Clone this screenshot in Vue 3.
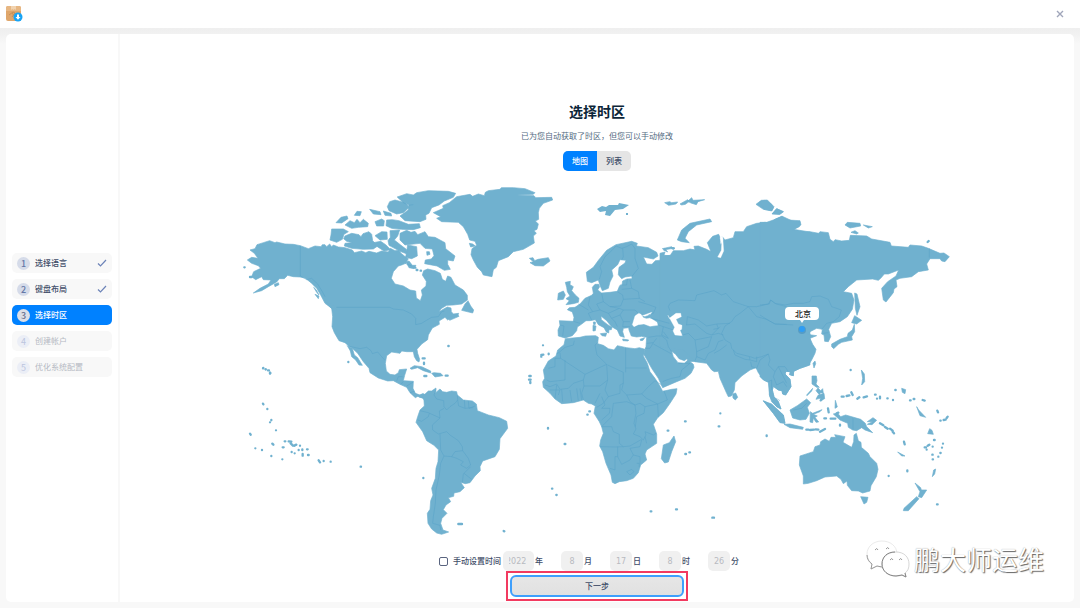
<script setup>
import { ref } from 'vue'

const steps = [
  { n: 1, label: '选择语言', state: 'done' },
  { n: 2, label: '键盘布局', state: 'done' },
  { n: 3, label: '选择时区', state: 'current' },
  { n: 4, label: '创建帐户', state: 'todo' },
  { n: 5, label: '优化系统配置', state: 'todo' }
]
const view = ref('map')
const manual = ref(false)
const fields = ref([
  { unit: '年', value: '2022', wide: true },
  { unit: '月', value: '8' },
  { unit: '日', value: '17' },
  { unit: '时', value: '8' },
  { unit: '分', value: '26' }
])
</script>

<template>
  <div class="window">
    <header class="titlebar">
      <svg class="app-icon" viewBox="0 0 18 18" aria-hidden="true">
        <rect x="1" y="1" width="15" height="15" rx="2" fill="#dfa66b" />
        <path d="M1 3q0-2 2-2h11q2 0 2 2v3H1z" fill="#e7b783" />
        <path d="M6 1h5v4L9.500 4 8.500 5 7.500 4 6 5z" fill="#f1d3b0" />
        <path d="M4 10l4-3 2 1-3 4M7 8l3 4" fill="none" stroke="#c58f58" stroke-width="1" />
        <circle cx="13" cy="12" r="4.500" fill="#18a4f5" />
        <path d="M12 9.500h2v2.500h1.500L13 14.800 10.500 12H12z" fill="#fff" />
      </svg>
      <button class="close" aria-label="关闭">
        <svg viewBox="0 0 8 8"><path d="M1 1l6 6M7 1l-6 6" fill="none" stroke="#a0a6ba" stroke-width="1.400" /></svg>
      </button>
    </header>

    <div class="panel">
      <nav class="sidebar">
        <button v-for="s in steps" :key="s.n" class="step" :class="s.state">
          <span class="num">{{ s.n }}</span>
          <span>{{ s.label }}</span>
          <svg v-if="s.state === 'done'" class="check" viewBox="0 0 10 8" aria-hidden="true">
            <path d="M1 4.500l2.500 2.500L9 1" fill="none" stroke="#6c83b8" stroke-width="1.200" />
          </svg>
        </button>
      </nav>

      <main class="content">
        <h1>选择时区</h1>
        <p class="sub">已为您自动获取了时区，但您可以手动修改</p>
        <div class="tabs">
          <button :class="{ on: view === 'map' }" @click="view = 'map'">地图</button>
          <button :class="{ on: view === 'list' }" @click="view = 'list'">列表</button>
        </div>

        <div class="map">
          <svg viewBox="237 180 720 360" role="img" aria-label="世界地图">
            <!-- North America -->
            <g class="land" transform="translate(235 180) scale(.33333)">
              <path d="M45 210L60 206 66 194 85 188 104 182 120 188 125 186 150 192 175 193 196 197 220 206 240 198 258 200 262 194 270 194 275 200 284 192 290 200 295 195 310 201 330 203 352 210 358 218 380 213 392 218 402 214 425 219 440 213 460 216 466 205 480 212 492 211 497 219 508 228 520 236 512 250 500 255 490 258 475 275 469 295 480 312 505 318 525 330 542 333 544 354 556 362 562 345 559 330 573 318 574 304 562 285 566 272 578 267 600 272 616 280 622 298 632 304 638 288 648 292 660 315 685 330 697 346 697 360 680 372 655 375 635 376 618 386 612 395 637 381 648 384 649 395 655 402 671 400 668 408 650 412 638 420 630 412 612 423 613 433 592 444 580 465 578 479 560 492 546 508 548 520 554 538 552 546 545 542 538 530 535 515 515 515 500 513 495 520 470 516 455 527 451 550 454 573 465 583 480 585 490 578 493 569 515 567 509 586 505 602 535 604 534 625 541 640 555 645 566 641 575 648 566 656 550 648 541 653 525 638 515 622 495 613 475 602 458 603 430 594 405 578 402 565 385 545 368 520 352 505 340 497 330 488 312 482 298 458 291 440 293 410 290 385 270 370 257 345 245 325 228 308 210 294 195 291 175 290 158 286 148 296 133 296 125 306 100 320 80 332 55 339 75 325 100 312 108 300 85 299 80 290 62 299 50 290 56 275 77 265 70 257 50 250 37 240 50 232 69 235 58 220z" />
              <path d="M338 499L352 505 358 525 368 533 382 556 372 555 362 540 350 530 346 513zM290 147L325 147 340 155 327 163 322 178 305 187 285 180 288 165zM330 168L350 160 372 164 378 170 384 161 402 155 410 163 413 182 428 198 415 207 385 208 350 205 328 198 330 190 352 188 335 184 326 176zM303 128L318 112 336 108 339 116 320 129zM330 135L345 122 358 128 366 118 375 128 385 118 400 130 398 140 370 142 350 145zM358 106L366 94 379 95 375 107zM404 88L435 95 438 104 415 102zM445 93L468 100 470 108 450 106zM420 125L440 117 448 122 446 138 425 138zM455 120L472 119 492 122 520 133 553 131 556 143 535 149 500 148 470 145 453 137zM457 80L464 65 480 60 510 68 523 82 505 98 485 102 462 92zM487 51L515 41 535 45 545 38 580 32 640 34 662 40 655 52 628 63 612 75 590 83 582 100 572 105 573 118 555 125 510 122 495 108 520 90 522 75 505 67z" />
              <path d="M420 167L440 155 456 156 457 178 435 180zM415 188l22-4 15 10 15 15-20 4-20-13zM465 152L494 150 488 168 478 180 497 195 514 208 516 222 495 214 462 196 459 182 466 172zM495 160L515 151 528 157 540 154 548 164 570 155 580 170 600 172 630 188 632 206 660 228 655 243 638 240 638 253 646 268 628 271 606 258 569 251 571 240 589 237 597 227 592 207 570 205 555 190 510 195 495 180zM518 195L545 200 547 228 530 236 512 232zM513 246L522 243 532 256 543 256 537 266 522 263zM575 215l8 0 2 8-9 3zM699 362L707 378 716 390 713 399 680 391 690 372zM525 565L538 557 560 560 587 573 587 579 565 572 548 563 530 568zM590 580L597 578 617 580 624 587 600 591zM236 322L244 330 252 345 245 337zM240 343L252 348 250 356zM271 366L286 372 300 382 305 392 290 386zM118 313l12-5 2 6-12 6zM640 413l28-9 4 5-28 12z" />
              <path class="dots" d="M28 262h1M45 291h5M545 270h2M557 272h1M540 263h1M640 498h1M568 588h6M632 587h6M563 535h6M567 548v4M84 565h0M92 568h0M99 571h3M105 578v3M340 546h0M602 400h1" />
            </g>
            <!-- Greenland and Iceland -->
            <g class="land" transform="translate(400 180) scale(.33333)">
              <path d="M100 98L130 85 128 77 148 68 170 50 210 43 218 49 235 42 253 47 256 37 265 32 300 28 304 23 340 23 375 26 405 38 400 43 350 45 402 47 407 53 455 52 458 60 430 70 418 85 415 98 416 118 406 123 415 132 411 148 402 152 409 160 400 168 403 189 370 208 340 215 325 230 295 242 289 262 280 269 276 290 250 285 245 275 232 262 220 240 213 224 216 206 230 196 225 184 209 180 203 163 190 140 175 127 125 125 110 115 122 110zM388 235L399 233 404 242 414 238 445 233 450 243 430 258 405 257 390 248 400 245zM208 190l10 2 8 6-14 3z" />
            </g>
            <!-- South America -->
            <g class="land" transform="translate(240 350) scale(.33333)">
              <path d="M518 125L535 138 548 131 556 138 550 144 538 142zM548 139L565 123 575 123 588 114 587 128 600 117 608 125 620 127 635 123 650 125 652 135 670 150 697 153 709 162 712 182 745 195 778 203 800 214 803 235 780 266 778 298 765 320 728 333 720 350 721 362 705 378 690 398 676 401 662 397 673 413 660 425 642 429 641 439 625 443 632 455 618 465 610 479 621 490 606 505 602 520 609 540 626 546 605 553 590 549 575 537 564 520 562 490 570 478 572 452 579 435 575 415 586 385 588 355 594 335 596 300 582 286 560 272 548 245 528 217 533 200 540 180 553 168 552 152z" />
              <path class="dots" d="M655 522h11M791 543l2 1M362 350h1M550 384h0M70 54h0M77 58h0M90 69h1M69 161l1 2M82 177h0M94 210v1M90 217h0M108 241h0M30 251l2 3M97 281l3 3M46 295h0M66 300h0M94 318h0M127 328h0M128 292h3M134 274h2M146 274l8 1M152 280l7 7M163 287l6-3M155 306h0M164 310h0M176 300h0M187 298v2M188 312v5M201 298h2M204 315h2M236 331l4 6M251 333h0M272 335h0M180 287h0" />
            </g>
            <!-- Africa and Europe -->
            <g class="land" transform="translate(530 230) scale(.33333)">
              <path d="M106 326L150 322 166 318 197 317 205 322 203 341 220 346 235 356 252 360 262 347 290 353 315 356 328 353 345 358 340 378 352 400 360 425 375 445 388 465 398 484 425 478 441 476 438 492 420 520 400 548 383 563 370 583 380 612 380 640 350 660 345 672 350 690 332 705 325 728 310 745 290 752 268 755 255 761 247 757 243 735 228 700 218 665 209 648 212 630 220 610 215 590 208 575 192 550 196 528 185 522 175 520 160 510 130 518 95 521 75 507 60 490 40 472 38 455 44 445 40 420 55 393 78 378 83 360 102 344zM432 618L437 635 425 665 415 696 404 699 394 686 400 645 418 638z" />
              <path d="M88 272L130 274 132 262 127 246 112 239 118 233 135 232 150 222 165 205 185 196 190 190 187 172 195 163 206 163 209 170 203 180 215 189 240 187 262 184 269 167 276 165 278 153 291 147 306 146 306 138 285 141 275 146 265 134 267 112 285 99 288 91 270 89 263 104 245 120 249 138 240 156 235 175 217 182 210 166 205 150 185 158 172 154 169 127 190 112 206 90 230 61 258 44 282 39 305 34 322 40 319 48 355 53 380 67 384 78 370 87 340 81 350 102 366 103 376 92 400 90 402 78 420 76 430 80 440 70 480 60 520 60 560 70 560 420 545 405 530 394 505 395 475 394 471 386 463 392 447 386 437 373 425 364 430 380 444 398 463 400 474 390 490 403 492 412 483 430 465 445 440 455 398 473 385 445 365 415 350 388 341 372 348 350 350 322 335 319 320 321 304 318 297 300 296 293 280 295 278 305 283 322 270 318 262 300 245 290 230 272 213 258 214 269 233 284 246 292 244 299 237 299 236 309 229 306 222 293 205 284 196 269 180 272 168 272 154 283 142 291 140 302 127 317 105 324 85 318 84 300 90 286zM106 157L121 154 120 164 130 170 125 182 136 195 147 205 145 217 130 221 108 224 118 212 108 206 120 198 112 185 110 172zM85 190L100 183 106 195 100 208 83 210zM211 311L230 309 227 319 216 317zM189 286l9 2-2 14-7 1zM190 276l6 0v7l-5 1zM278 327l18 3-2 3-15-1zM330 328l14-5-5 8-7 1zM397 56L425 50 430 55 405 59z" />
              <path class="dots" d="M-2 438h4M-3 449h5M1 456v3M34 375l6-1M34 378v2M56 371v2M39 346h0M178 544h2M172 554h1M54 594v2M104 642h2M66 776h1M79 795h1M413 602h2M465 574h2M566 589h2M466 672h2M478 667h2M430 55h1M362 844h2M438 838h3M547 863h5" />
              <path class="sea" d="M307 284L315 258 326 250 333 253 340 263 350 266 361 264 381 277 383 286 360 289 342 282 325 284 312 290zM337 257L365 247 362 253 345 259zM418 263L436 250 450 250 452 260 438 268 445 283 456 285 455 297 450 301 457 317 435 315 429 302 433 292zM452 284h6v6h-6z" />
            </g>
            <!-- Svalbard -->
            <path class="land" d="M597 209l5-3 4 1 3-2 9 0 1-2 10 2-6 4-8 1-5 6-5-1 1-4-6 1zM626 213h2v2h-2z" />
            <!-- Central Asia -->
            <g class="land" transform="translate(640 190) scale(.33333)">
              <path d="M60 190L75 186 72 196 90 197 100 182 130 182 150 177 165 180 162 169 175 168 200 178 213 185 202 158 218 139 236 133 241 145 240 165 250 150 247 140 255 150 280 143 285 125 310 125 320 110 350 100 375 97 390 99 405 88 425 79 440 90 480 92 483 105 460 118 510 126 510 525 480 535 461 544 460 557 449 554 451 545 438 544 435 552 450 568 453 590 437 615 428 612 426 602 415 600 400 589 397 600 402 620 415 635 423 657 410 650 395 635 388 615 387 577 372 570 355 548 348 533 330 540 305 558 285 578 283 600 274 618 265 620 260 610 240 565 235 544 223 545 215 540 200 520 165 515 150 500 130 480 60 470zM112 150L125 120 150 100 210 87 215 95 170 105 145 125 135 145 148 158 125 155zM348 43L364 31 382 30 402 50 396 62 370 58zM397 71L410 56 430 65 420 73zM74 38l15-3 6 3 18-2-5 6-22 4zM120 42l23-13 5 5-12 9-11 2zM143 34l12-11 4 8 35-2-20 6-5 9-16-5zM278 612l9-3 6 13-7 8-7-6zM370 633L395 642 430 675 435 700 420 697 400 670zM83 186l-13-6 4-5z" />
              <path class="dots" d="M97 175h4M241 670h0" />
              <path class="sea" d="M240 143l5 20-1 18-11 20 9 2 9-20-3-45zM84 376L88 385 108 370 122 370 124 380 108 388 115 402 126 406 125 418 120 421 127 437 105 435 99 422 104 412z" />
            </g>
            <!-- East Asia and Oceania -->
            <g class="land" transform="translate(760 190) scale(.33333)">
              <path d="M0 97L20 97 40 90 67 79 95 92 120 97 118 110 98 120 130 127 150 125 176 130 180 125 205 128 210 148 220 155 225 149 245 153 268 151 271 136 320 138 335 147 390 157 394 168 445 172 450 165 485 168 505 175 540 190 552 189 568 200 555 215 545 213 540 206 510 206 500 222 505 240 475 245 455 260 420 265 408 270 411 290 402 297 400 308 378 336 370 330 365 295 383 275 408 258 416 240 385 252 373 252 362 265 355 271 338 267 290 270 265 290 250 305 275 310 282 330 277 358 262 380 240 395 215 400 206 418 212 440 205 455 194 454 192 435 185 432 187 418 170 415 150 425 140 431 155 435 170 437 150 445 158 463 168 478 165 490 155 510 145 526 120 535 101 544 100 557 89 554 91 545 78 544 75 552 90 568 93 590 77 615 68 612 66 602 55 600 40 589 37 600 42 620 55 635 63 657 50 650 30 620 25 577 10 570 0 560z" />
              <path d="M284 309L291 312 300 350 291 376 286 355zM284 377L305 391 290 402 275 398zM283 403L284 425 275 440 277 450 245 457 235 463 221 476 215 470 215 462 240 448 262 440 264 430 277 420zM159 520l6-7 2 8-5 13zM156 558l13 0 2 14-3 10 10 10-8 0-14-10zM168 602l6-8 8 8 6-6 2 14-8-2-4 6zM180 625l-12 3 6-12 18-6 2 16-8 4zM10 632L30 642 70 675 75 700 60 698 40 670zM72 703L90 702 130 712 128 718 90 713zM90 660L112 647 140 627 152 638 142 652 148 670 138 688 120 690 98 684zM151 665L158 670 186 659 180 665 160 673 172 678 165 682 176 696 168 697 160 684 158 698 150 696zM220 672L232 669 242 680 257 675 302 688 316 700 320 710 338 728 315 720 305 713 290 722 278 720 265 712 263 700 240 690zM120 798L160 785 165 770 180 765 182 755 195 747 208 754 213 742 228 742 224 734 255 740 249 757 275 772 281 755 282 735 289 730 295 752 303 757 304 772 325 790 330 800 350 820 354 838 349 860 333 887 330 903 308 909 295 903 275 902 262 886 261 873 250 881 243 868 230 858 195 861 170 872 145 880 130 882 130 858 118 825zM302 920L324 922 320 937 312 942zM465 879L482 893 484 900 500 900 485 923 475 920 480 905zM470 920L477 926 445 962 430 962 432 955zM255 105L262 97 300 100 302 108 270 114zM310 105L337 110 325 114zM273 127L285 122 295 129 290 132zM304 540L313 552 314 575 305 585 308 565zM470 650L476 660 497 682 480 677zM413 786l22 12-10 0zM517 860l4-20 6-3-3 15zM322 695l17-12 11 8-14 13-14-1 16-8zM425 595l12 4-2 12-8-4zM503 731l6-15 7 5 4 12zM0 35L15 31 34 42 40 53 35 63 12 58zM36 72L50 56 70 65 58 73zM140 615l18-20-3 8-14 14zM226 631l6 20-7 4z" />
              <path class="dots" d="M20 736v2M272 540h0M506 153l-3 3M139 719l6 0M150 720l12-1M167 718l8 1M180 725l15-8M193 685h5M204 655l2 12M212 686h14M240 704v3M245 620h6M260 618l8-2M274 607l4 8M292 626l6-4M311 622l10-3M345 614h2M351 626h0M360 620v5M382 625h1M399 630h0M406 600h1M450 631h2M461 627h2M488 630l6 2M532 662l2 5M541 692h1M551 690l6-1M560 684l3-4M360 700l10 6M375 711l8 5M390 716l8 6M398 725l4 5M432 755l2 8M442 841v3M386 858h0M531 943h2M494 772h4M503 767l5-3M500 779h0M522 750h2M518 770h0M517 794h1M518 808h1M535 800h0M541 789h1M546 773h0M549 761h0M185 628l-3 3M235 668l-5 2" />
            </g>

            <!-- Country borders -->
            <g class="border">
              <g transform="translate(235 180) scale(.33333)">
                <path d="M196 197V288L215 299 230 295 248 312 262 335 270 350M304 382H465L475 387 505 390 530 402 542 415 542 434 560 430 576 420 590 412 610 410 620 395 628 393M335 497L375 506 395 502 408 512 412 521 428 516 440 530 450 541M485 603L490 590 503 590M505 604L497 614M535 606L515 618M525 638L538 634M487 51L505 68 520 76 535 74M510 250L530 258" />
              </g>
              <g transform="translate(240 350) scale(.33333)">
                <path d="M588 118L582 135 590 147 611 152 612 170 620 180 630 170 645 160 653 150 652 135M653 150L656 168 675 175 673 150M685 153L687 175 705 168M675 175L700 173M540 182L565 188 600 204 598 183 612 175M533 210L545 214 565 200 568 190M600 204L577 225 578 240 595 252 620 245 630 255 655 272 667 290 668 302 645 305 635 320 612 318 602 300 600 252M668 302L685 325 692 345 680 355 662 345 670 335 650 325 635 320M692 350L670 372 667 398M672 370L695 388M612 318L602 340 598 375 588 420 586 460 580 500 578 520 600 526 602 540" />
              </g>
              <g transform="translate(530 230) scale(.33333)">
                <path d="M133 332L130 345 105 352 90 365 80 372M90 368L92 385 165 433 230 403 201 375 195 345 203 338M92 385H75V410L55 415M105 390V450L60 455 50 450M165 433L160 450 130 460 115 475 90 478 80 462 60 470 45 465M230 403L233 450 210 468 162 468 160 450M233 405L280 427V460L270 465 270 490 235 500 225 480 233 450M287 353V427M287 414H350M280 460L275 480 290 495 335 492 355 470 375 452 395 465M335 492L350 505 383 522 412 510 402 482M290 495L300 515 315 525 330 520 345 530 383 522 385 562M345 530L342 550 320 560 316 590M315 525L318 550 312 580 318 597 310 612 330 620 340 630 348 615 345 605 370 615 378 610M250 520L245 560 225 580 215 590 245 590 250 605 268 613 268 640 280 650 300 648 335 628M250 520L290 515 315 525M235 500L220 520 200 532M215 500L225 525 215 535 240 535 238 550 215 570M210 650L255 651 280 650M263 650V680H255V720L240 715M263 680L275 703 300 690 310 675 300 655M310 675L330 680 330 700M300 655L330 650 335 630M345 620L350 640M290 725L305 718 312 725 300 735zM320 700L328 700 328 712M95 478L98 515M120 480L125 515M140 475L145 512M150 475L155 510M80 465L75 505M60 480L90 480 85 495M162 468L155 490 160 510M210 490L195 520" />
                <path d="M258 48L245 62 225 80 210 110 215 125 208 148M258 48L275 55 290 50 305 42 315 55 315 85 325 115 305 140M278 55L280 80 275 90M292 147L290 165 270 165M300 150L305 175 275 178M305 175L325 185 328 205 280 208 278 195 262 185M215 190L220 215 240 230 272 228 280 208M180 200L175 225 188 245 175 250 185 270M145 222L175 240M220 215L200 222 210 240 188 245M210 240L235 250 268 235 240 230M268 235L280 240 315 240 325 250M235 250L245 265 270 255 280 240M325 215L350 222 378 232 370 250 355 255M328 205L345 215M270 255L280 275 300 275M245 265L255 275 262 290M280 275L278 290 300 290M90 285L102 288 98 318M130 274L150 280M360 264L400 275 418 280M385 285L400 290 395 315 415 325M400 290L430 300M355 322L380 318 395 318 410 330 415 350 425 365M350 340L370 338 380 325M370 338L360 355 345 355M370 342L425 372M398 455L410 450 425 445 450 440 455 420 480 400M445 400L480 400M415 325L400 305" />
              </g>
              <g transform="translate(640 190) scale(.33333)">
                <path d="M90 362L85 350 90 340 115 330 165 332 170 315 190 310 222 302 245 315 258 310 280 335 310 345 325 350 350 350 385 342 392 330 408 342 440 350M325 350L300 370 285 380 275 395 255 408 245 430 255 450 272 460 275 475 290 490 330 500 345 505 365 500 385 492M325 350L350 380 380 388 405 402 440 403M140 405L142 380 175 390 200 408 230 402 270 400M138 405L165 402 200 430 215 435 240 410M215 435L235 430 250 435M125 436L145 430 165 450 170 485 205 470 215 440M165 450L190 445 215 440M170 485L170 500 165 512M170 500L195 510 205 490 225 480 235 455 250 450M222 490L240 480 260 465M280 480L285 495 315 508 330 510 328 500M330 510L350 515 350 500M332 515L335 530 350 535M350 535L360 510 385 492 390 510 385 525 405 545 415 530 435 530 445 545M405 545L400 560 410 585 430 575 440 590M415 530L430 560 440 580M385 575L395 570 395 600M408 625L420 632M230 402L235 415 220 418" />
              </g>
              <g transform="translate(760 190) scale(.33333)">
                <path d="M0 345L28 342 32 330 45 340 75 345 100 340 130 340 150 335 155 320 180 318 205 328 215 350 244 360 238 380 220 395 200 400 185 418M0 375L20 388 45 402 100 405M508 175V203M279 685V718M100 660L125 655 140 640M190 430L205 428" />
              </g>
            </g>

            <!-- Selected city -->
            <circle cx="802" cy="330" r="4" fill="#3b87bb" opacity=".5" />
            <circle cx="802" cy="329" r="3" fill="#2e9df4" />
            <path d="M789 307h26q4 0 4 4v5q0 4-4 4H804l-2 3-2-3H789q-4 0-4-4v-5q0-4 4-4z" fill="#fff" />
            <text class="city" x="803" y="317" text-anchor="middle">北京</text>
          </svg>
        </div>

        <form class="time" @submit.prevent>
          <label class="manual"><input v-model="manual" type="checkbox" /><span>手动设置时间</span></label>
          <label v-for="f in fields" :key="f.unit" class="field" :class="{ wide: f.wide }">
            <input v-model="f.value" type="text" :disabled="!manual" /><span>{{ f.unit }}</span>
          </label>
        </form>
        <div class="highlight">
          <button class="next">下一步</button>
        </div>
      </main>
    </div>

    <div class="brand">
      <svg viewBox="0 0 44 38" aria-hidden="true">
        <path d="M16 1C7 1 1 7 1 14c0 4 2 7 5 10l-1 5 6-3c2 1 4 1 6 1 8 0 14-5 14-13S24 1 16 1z" fill="#fff" stroke="#dcdcdc" stroke-width=".6" />
        <path d="M1 15c0 4 2 7 5 9l-1 5 6-3 5 1" fill="none" stroke="#9a9a9a" stroke-width="1" />
        <path d="M30 12c-8 0-14 5-14 12s6 12 14 12c2 0 4 0 6-1l4 2-1-4c3-2 4-5 4-9 0-7-5-12-13-12z" fill="#fff" stroke="#c4c4c4" stroke-width=".7" />
        <path d="M29 12c-8 0-13 5-13 12s6 12 14 12l6-1 4 2-1-4" fill="none" stroke="#858585" stroke-width="1" />
        <path d="M9 10q2-3 3 0M20 9q2-3 3 0M24 20q2-3 3 0M33 20q2-3 3 0" fill="none" stroke="#999" stroke-width="1" />
      </svg>
      <span>鹏大师运维</span>
    </div>
  </div>
</template>

<style>
body { background: #f8f8f8; }
</style>

<style scoped>
.window {
  position: relative;
  display: flex;
  flex-direction: column;
  height: 100vh;
  box-sizing: border-box;
  padding-bottom: 6px;
  background: linear-gradient(#efefef 28px, #f0f0f0 32px, #f8f8f8 44px);
  font: 8px/12px "Noto Sans CJK SC", sans-serif;
  color: #414d68;
}
button, input { font: inherit; color: inherit; border: 0; padding: 0; margin: 0; }
.titlebar {
  display: flex;
  align-items: center;
  justify-content: space-between;
  height: 28px;
  flex: none;
  box-sizing: border-box;
  padding: 0 16px 0 5px;
  background: #fff;
}
.app-icon { width: 18px; height: 18px; }
.close { width: 8px; height: 8px; background: none; display: flex; }
.close svg { width: 8px; height: 8px; }
.panel {
  flex: 1;
  min-height: 0;
  display: flex;
  margin: 6px 6px 0;
  border-radius: 5px;
  background: #fff;
}
.sidebar {
  display: flex;
  flex-direction: column;
  justify-content: center;
  gap: 6px;
  width: 100px;
  flex: none;
  padding: 0 6px 6px;
  border-right: 2px solid #f8f8f8;
}
.step {
  display: flex;
  align-items: center;
  gap: 5px;
  height: 20px;
  padding: 0 5px;
  border-radius: 5px;
  background: #f8f8f8;
  font-weight: 500;
}
.num {
  width: 13px;
  height: 13px;
  border-radius: 50%;
  background: #d5dbe9;
  color: #6477a6;
  font-size: 9px;
  line-height: 13px;
  text-align: center;
}
.check { width: 10px; height: 8px; margin-left: auto; }
.current { background: #0081ff; color: #fff; }
.current .num { background: #dcdfe7; color: #65718f; }
.todo { color: #b5b8c3; font-weight: 400; }
.todo .num { background: #ebeef6; color: #bcc5de; }
.content {
  flex: 1;
  min-width: 0;
  display: flex;
  flex-direction: column;
  align-items: center;
  padding: 67px 0 1px;
}
h1 { margin: 0 0 9px; font-size: 14px; line-height: 20px; font-weight: 700; color: #0c2538; }
.sub { margin: 0 0 9px; color: #526a7f; }
.tabs { display: flex; border-radius: 5px; overflow: hidden; background: #e5e5e5; flex: none; }
.tabs button { width: 34px; height: 20px; background: none; font-weight: 500; }
.tabs .on { background: #0081ff; color: #fff; }
.map { flex: 1; min-height: 0; width: 100%; margin: 9px 0 11px; }
.map svg { display: block; width: 100%; height: 100%; }
.land { fill: #70b1cf; }
.land path { stroke: #70b1cf; stroke-width: 2; stroke-linejoin: round; }
.land .dots { fill: none; stroke-width: 7; stroke-linecap: round; }
.land .sea { fill: #fff; stroke: #fff; stroke-width: 1; }
.border path { fill: none; stroke: #559fc6; stroke-width: 2; stroke-linejoin: round; opacity: .7; }
.city { font-size: 8px; font-weight: 500; fill: #222; }
.time { display: flex; align-items: center; height: 20px; flex: none; font-weight: 500; }
.manual { display: flex; align-items: center; gap: 5px; margin-right: 2px; }
.manual input {
  appearance: none;
  width: 9px;
  height: 9px;
  box-sizing: border-box;
  border: 1px solid #59647f;
  border-radius: 2px;
}
.field { display: flex; align-items: center; gap: 1px; margin-right: 18px; }
.field:last-child { margin-right: 16px; }
.field input {
  width: 22px;
  height: 20px;
  box-sizing: border-box;
  border-radius: 5px;
  background: #f0f0f0;
  color: #b8bac0;
  text-align: center;
  font-family: "DejaVu Sans", sans-serif;
  font-weight: 400;
}
.field.wide input { width: 31px; padding: 0 8px 0 6px; text-align: right; text-indent: -3px; }
.highlight { flex: none; border: 2px solid #f23a60; padding: 2px; width: 174px; }
.next {
  display: block;
  width: 100%;
  height: 22px;
  border: 2px solid #3e9ffc;
  border-radius: 6px;
  background: linear-gradient(#e6e6e6, #e1e1e1);
  font-weight: 500;
}
.brand { position: absolute; right: 36px; bottom: 29px; display: flex; align-items: center; gap: 4px; }
.brand svg { width: 44px; height: 38px; }
.brand span {
  font-size: 26px;
  line-height: 40px;
  font-weight: 400;
  color: #fff;
  text-shadow: 1px 1px 1px #666, 0 0 1px #999;
}
</style>
